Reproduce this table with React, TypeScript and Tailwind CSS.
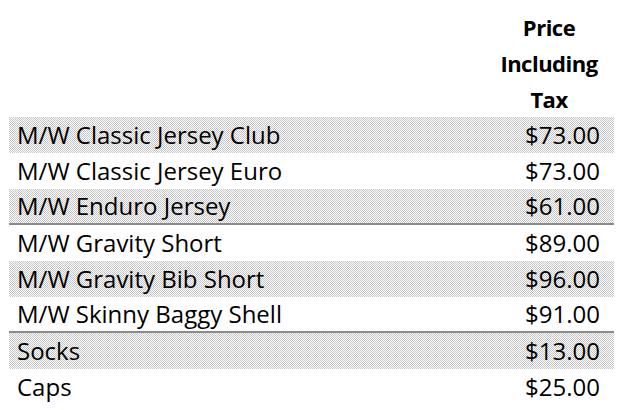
const rows = [
  { name: 'M/W Classic Jersey Club', price: '$73.00', shaded: true },
  { name: 'M/W Classic Jersey Euro', price: '$73.00', shaded: false },
  { name: 'M/W Enduro Jersey', price: '$61.00', shaded: true, rule: true },
  { name: 'M/W Gravity Short', price: '$89.00', shaded: false },
  { name: 'M/W Gravity Bib Short', price: '$96.00', shaded: true },
  { name: 'M/W Skinny Baggy Shell', price: '$91.00', shaded: false, rule: true },
  { name: 'Socks', price: '$13.00', shaded: true },
  { name: 'Caps', price: '$25.00', shaded: false },
]

// 1px dither: stripes xor stripes (difference), then screened with the gray
const dither =
  'bg-[linear-gradient(#c4c4c4,#c4c4c4),linear-gradient(#fff_50%,#000_0),linear-gradient(90deg,#fff_50%,#000_0)] bg-[length:2px_2px] [background-blend-mode:screen,difference,normal]'

export default function App() {
  return (
    <div className="w-[622px] h-[410px] bg-white overflow-hidden font-['Open_Sans',sans-serif] text-black">
      <div className="ml-[9px] mr-[8px] pt-[9px]">
        {/* Header */}
        <div className="flex justify-end">
          <div className="w-[130px] text-center font-bold text-[22px] leading-[36px] tracking-[-0.5px]">
            Price
            <br />
            Including
            <br />
            Tax
          </div>
        </div>

        {/* Price rows */}
        {rows.map((row) => (
          <div
            key={row.name}
            className={`flex justify-between items-center h-[36px] pl-[8px] pr-[14px] text-[24px] ${
              row.shaded ? dither : ''
            } ${row.rule ? 'border-b-2 border-[#8a8a8a]' : ''}`}
          >
            <span>{row.name}</span>
            <span>{row.price}</span>
          </div>
        ))}
      </div>
    </div>
  )
}
